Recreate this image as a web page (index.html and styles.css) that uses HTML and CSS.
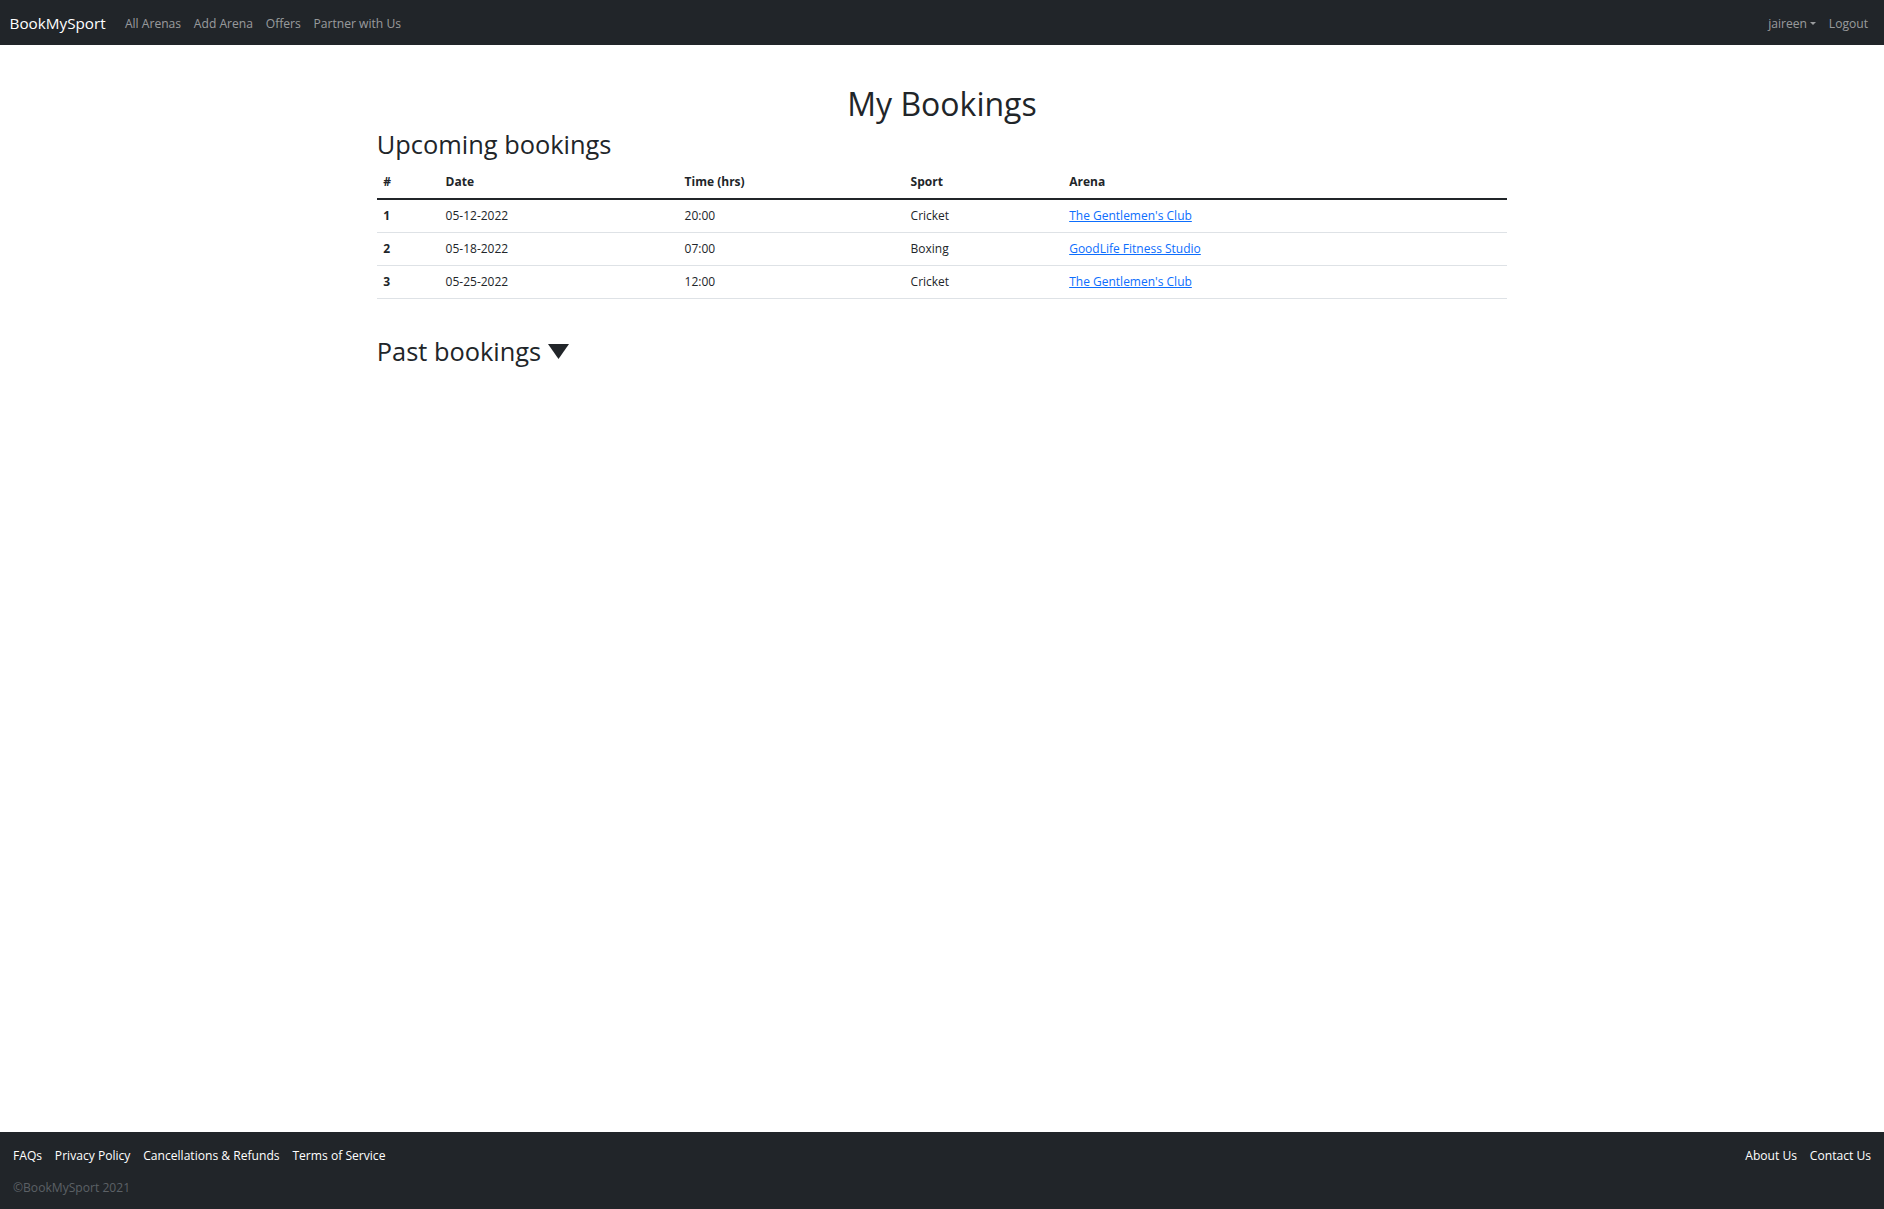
FILE: index.html
```html
<!DOCTYPE html>
<html lang="en">
<head>
<meta charset="utf-8">
<title>My Bookings - BookMySport</title>
<link rel="stylesheet" href="styles.css">
</head>
<body>
<nav class="navbar">
  <div class="nav-left">
    <a class="brand" href="#">BookMySport</a>
    <ul class="nav-links">
      <li><a class="nav-link" href="#">All Arenas</a></li>
      <li><a class="nav-link" href="#">Add Arena</a></li>
      <li><a class="nav-link" href="#">Offers</a></li>
      <li><a class="nav-link" href="#">Partner with Us</a></li>
    </ul>
  </div>
  <ul class="nav-links">
    <li><a class="nav-link dropdown-toggle" href="#">jaireen</a></li>
    <li><a class="nav-link" href="#">Logout</a></li>
  </ul>
</nav>

<main class="content">
  <h1 class="page-title">My Bookings</h1>
  <h2 class="section-title">Upcoming bookings</h2>
  <table class="bookings">
    <colgroup>
      <col class="col-num">
      <col class="col-date">
      <col class="col-time">
      <col class="col-sport">
      <col>
    </colgroup>
    <thead>
      <tr>
        <th>#</th>
        <th>Date</th>
        <th>Time (hrs)</th>
        <th>Sport</th>
        <th>Arena</th>
      </tr>
    </thead>
    <tbody>
      <tr>
        <th>1</th>
        <td>05-12-2022</td>
        <td>20:00</td>
        <td>Cricket</td>
        <td><a href="#">The Gentlemen's Club</a></td>
      </tr>
      <tr>
        <th>2</th>
        <td>05-18-2022</td>
        <td>07:00</td>
        <td>Boxing</td>
        <td><a href="#">GoodLife Fitness Studio</a></td>
      </tr>
      <tr>
        <th>3</th>
        <td>05-25-2022</td>
        <td>12:00</td>
        <td>Cricket</td>
        <td><a href="#">The Gentlemen's Club</a></td>
      </tr>
    </tbody>
  </table>
  <h2 class="past-title">Past bookings <svg class="caret-big" width="21" height="15" viewBox="0 0 21 15"><polygon points="0,0 21,0 10.5,15" fill="#212529"/></svg></h2>
</main>

<footer class="footer">
  <div class="footer-left">
    <div class="footer-links">
      <a href="#">FAQs</a>
      <a href="#">Privacy Policy</a>
      <a href="#">Cancellations &amp; Refunds</a>
      <a href="#">Terms of Service</a>
    </div>
    <div class="copyright">©BookMySport 2021</div>
  </div>
  <div class="footer-links">
    <a href="#">About Us</a>
    <a href="#">Contact Us</a>
  </div>
</footer>
</body>
</html>
```

FILE: styles.css
```css
html, body {
  margin: 0;
  padding: 0;
}

body {
  font-family: "Open Sans", "Liberation Sans", sans-serif;
  font-size: 12.1px;
  line-height: 19.2px;
  color: #212529;
  background: #fff;
  display: flex;
  flex-direction: column;
  min-height: 100vh;
}

a {
  color: #0d6efd;
}

/* Navbar */
.navbar {
  background: #212529;
  height: 44.8px;
  box-sizing: border-box;
  padding: 2px 9.6px 0;
  display: flex;
  align-items: center;
  justify-content: space-between;
}

.nav-left {
  display: flex;
  align-items: center;
}

.brand {
  color: #fff;
  text-decoration: none;
  font-size: 15.25px;
  line-height: 24px;
  margin-right: 12.8px;
}

.nav-links {
  list-style: none;
  margin: 0;
  padding: 0;
  display: flex;
  align-items: center;
}

.nav-link {
  display: block;
  padding: 0 6.4px;
  color: rgba(255, 255, 255, 0.55);
  text-decoration: none;
}

.dropdown-toggle::after {
  content: "";
  display: inline-block;
  margin-left: 0.255em;
  vertical-align: 0.255em;
  border-top: 0.3em solid;
  border-right: 0.3em solid transparent;
  border-left: 0.3em solid transparent;
}

/* Content */
.content {
  flex: 1;
  width: 60%;
  margin: 0 auto;
}

.page-title {
  font-size: 32px;
  font-weight: 400;
  line-height: 1.2;
  text-align: center;
  margin: 40px 0 6px;
}

.section-title {
  font-size: 25.4px;
  font-weight: 400;
  line-height: 1.2;
  margin: 0 0 6px;
}

.bookings {
  width: 100%;
  border-collapse: collapse;
  table-layout: fixed;
  margin-bottom: 12.8px;
  font-size: 12px;
}

.col-num { width: 62.4px; }
.col-date { width: 239px; }
.col-time { width: 226px; }
.col-sport { width: 158.6px; }

.bookings th,
.bookings td {
  padding: 6.4px;
  text-align: left;
  border-bottom: 1px solid #dee2e6;
  vertical-align: top;
}

.bookings th {
  font-weight: 700;
}

.bookings thead th {
  vertical-align: bottom;
  border-bottom: 2px solid #212529;
}

.past-title {
  font-size: 25.4px;
  font-weight: 400;
  line-height: 1.2;
  margin: 37px 0 0;
  display: flex;
  align-items: center;
}

.caret-big {
  margin-left: 7px;
  margin-top: 1px;
}

/* Footer */
.footer {
  background: #212529;
  padding: 14px 13px 12px;
  display: flex;
  justify-content: space-between;
  align-items: flex-start;
}

.footer-links {
  display: flex;
  gap: 12.8px;
}

.footer-links a {
  color: #fff;
  text-decoration: none;
}

.copyright {
  margin-top: 13px;
  color: #5c6166;
}
```
